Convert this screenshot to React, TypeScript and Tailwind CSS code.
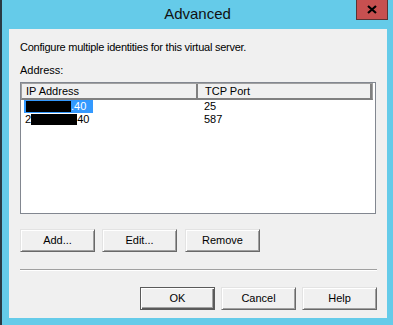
import type { ReactElement, ReactNode } from 'react';

const font = { fontFamily: '"Liberation Sans", Arial, sans-serif' };

function WinButton({ children, primary = false }: { children: ReactNode; primary?: boolean }): ReactElement {
  return (
    <button
      type="button"
      className={
        primary
          ? 'h-[23px] w-[75px] border border-[#5a5a5a] bg-[#f0f0f0] text-[11px] text-black shadow-[inset_1px_1px_0_#ffffff,inset_-1px_-1px_0_#5a5a5a,inset_-2px_-2px_0_#a0a0a0]'
          : 'h-[23px] w-[75px] border border-t-[#e3e3e3] border-l-[#e3e3e3] border-r-[#696969] border-b-[#696969] bg-[#f0f0f0] text-[11px] text-black shadow-[inset_1px_1px_0_#ffffff,inset_-1px_-1px_0_#a0a0a0]'
      }
    >
      {children}
    </button>
  );
}

export default function App(): ReactElement {
  return (
    <div className="w-[393px] h-[325px] bg-[#65cbe9] border-l-2 border-[#2a3a44] overflow-hidden" style={font}>
      {/* title bar */}
      <div className="flex h-[29px]">
        <div className="w-[37px]" />
        <div className="flex-1 pt-[4px] text-center text-[15px] leading-[20px] text-[#111]">Advanced</div>
        <div className="mr-[5px] flex h-[20px] w-[32px] items-center justify-center border border-t-0 border-[#5a3434] bg-[#c75050]">
          <svg width="10" height="9" viewBox="0 0 10 9">
            <path d="M1 1 L9 8 M9 1 L1 8" stroke="#000" strokeWidth="2.2" />
          </svg>
        </div>
      </div>

      {/* client area */}
      <div className="ml-[7px] h-[289px] w-[378px] bg-[#f0f0f0] px-[11px] pt-[12px] text-[11px] text-black">
        <p className="leading-[13px] tracking-[-0.25px]">Configure multiple identities for this virtual server.</p>
        <p className="mt-[10px] leading-[13px]">Address:</p>

        <div className="mt-[5px] h-[132px] w-[356px] border border-[#828790] bg-white">
          <div className="flex h-[17px] w-[352px] border border-[#a0a0a0] border-b-2 border-b-[#808080] bg-[#f0f0f0]">
            <div className="w-[176px] border-r-2 border-[#808080] pl-[4px] leading-[14px]">IP Address</div>
            <div className="flex-1 border-r-2 border-[#808080] pl-[7px] leading-[14px]">TCP Port</div>
          </div>
          <div className="flex h-[13px] leading-[13px]">
            <div className="w-[176px] pl-[3px]">
              <span className="inline-flex h-[13px] items-center bg-[#3399ff] pr-[7px] text-white">
                <span className="ml-[2px] inline-block h-[11px] w-[45px] bg-black" />
                .40
              </span>
            </div>
            <div className="pl-[7px]">25</div>
          </div>
          <div className="flex h-[13px] leading-[13px]">
            <div className="flex w-[176px] items-center pl-[4px]">
              <span>2</span>
              <span className="inline-block h-[11px] w-[46px] bg-black" />
              <span>40</span>
            </div>
            <div className="pl-[7px]">587</div>
          </div>
        </div>

        <div className="mt-[15px] flex">
          <WinButton>Add...</WinButton>
          <div className="ml-[7px]">
            <WinButton>Edit...</WinButton>
          </div>
          <div className="ml-[8px]">
            <WinButton>Remove</WinButton>
          </div>
        </div>

        <div className="mt-[17px] h-[2px] w-[357px] border-t border-b border-t-[#a0a0a0] border-b-white" />

        <div className="mt-[16px] flex w-[357px] justify-end gap-[6px]">
          <WinButton primary>OK</WinButton>
          <WinButton>Cancel</WinButton>
          <WinButton>Help</WinButton>
        </div>
      </div>
    </div>
  );
}
